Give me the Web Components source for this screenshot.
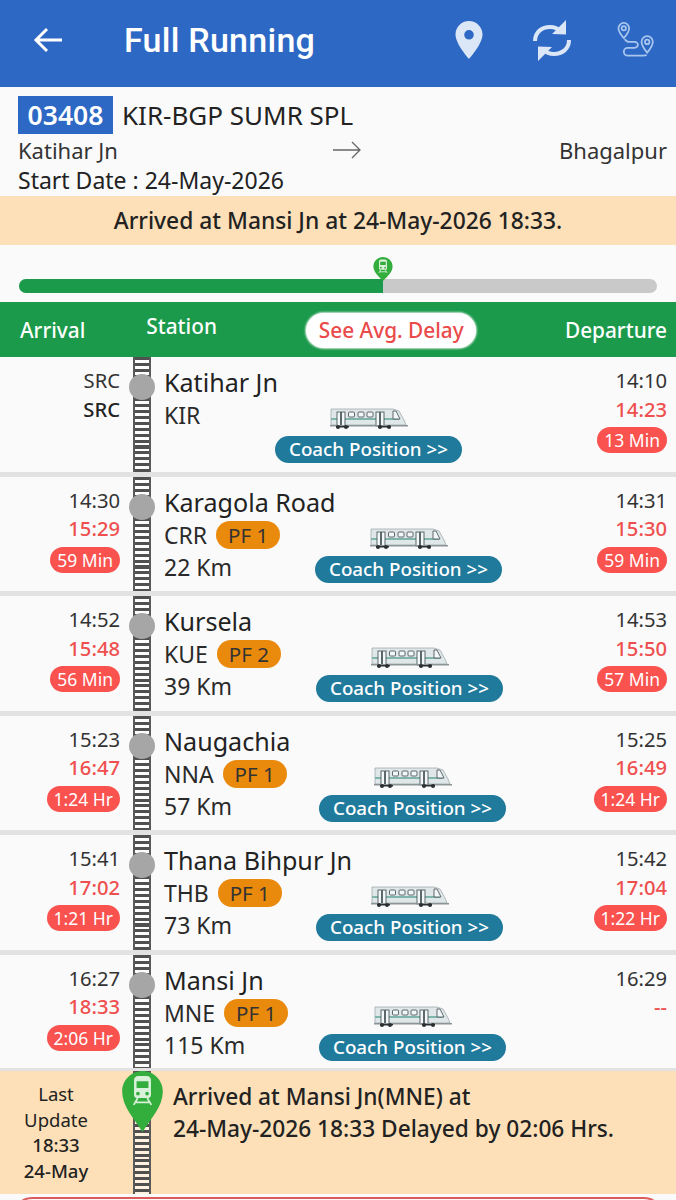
<!DOCTYPE html>
<html>
<head>
<meta charset="utf-8">
<title>Full Running</title>
<style>
  html, body { margin: 0; padding: 0; background: #fafafa; }
  body { width: 676px; height: 1200px; overflow: hidden; font-family: "Noto Sans", "Open Sans", sans-serif; color: #222; }
</style>
</head>
<body>
<app-bar></app-bar>
<train-head number="03408" name="KIR-BGP SUMR SPL" from="Katihar Jn" to="Bhagalpur" date="24-May-2026"></train-head>
<status-banner>Arrived at Mansi Jn at 24-May-2026 18:33.</status-banner>
<route-progress percent="57"></route-progress>
<table-head></table-head>
<station-row name="Katihar Jn" code="KIR" offset="111" sch-arr="SRC" act-arr="SRC" sch-dep="14:10" act-dep="14:23" dep-late="13 Min"></station-row>
<station-row name="Karagola Road" code="CRR" pf="PF 1" km="22 Km" offset="151" sch-arr="14:30" act-arr="15:29" arr-late="59 Min" sch-dep="14:31" act-dep="15:30" dep-late="59 Min"></station-row>
<station-row name="Kursela" code="KUE" pf="PF 2" km="39 Km" offset="152" sch-arr="14:52" act-arr="15:48" arr-late="56 Min" sch-dep="14:53" act-dep="15:50" dep-late="57 Min"></station-row>
<station-row name="Naugachia" code="NNA" pf="PF 1" km="57 Km" offset="155" sch-arr="15:23" act-arr="16:47" arr-late="1:24 Hr" sch-dep="15:25" act-dep="16:49" dep-late="1:24 Hr"></station-row>
<station-row name="Thana Bihpur Jn" code="THB" pf="PF 1" km="73 Km" offset="152" sch-arr="15:41" act-arr="17:02" arr-late="1:21 Hr" sch-dep="15:42" act-dep="17:04" dep-late="1:22 Hr"></station-row>
<station-row last name="Mansi Jn" code="MNE" pf="PF 1" km="115 Km" offset="155" sch-arr="16:27" act-arr="18:33" arr-late="2:06 Hr" sch-dep="16:29" act-dep="--"></station-row>
<last-update time="18:33" date="24-May">Arrived at Mansi Jn(MNE) at<br>24-May-2026 18:33 Delayed by 02:06 Hrs.</last-update>
<alert-card></alert-card>

<script>
const FONT = `"Noto Sans", "Open Sans", sans-serif`;
// small engine seen from the front, sits inside the 24 wide green pin
const TRAIN_GLYPH = `<path fill="#d9f0d9" fill-rule="evenodd" d="M9.500 3h5C16 3 17 4 17 5.500V14c0 1.200-.8 2-2 2H9c-1.200 0-2-.8-2-2V5.500C7 4 8 3 9.500 3zM8.500 6v4h7V6zM9.300 12.200a1.100 1.100 0 1 0 0 2.200 1.100 1.100 0 0 0 0-2.200zm5.400 0a1.100 1.100 0 1 0 0 2.200 1.100 1.100 0 0 0 0-2.200z"/><path fill="none" stroke="#d9f0d9" stroke-width="1.100" d="M9.200 16l-2.400 4M14.800 16l2.400 4M8.200 18.500h7.600"/>`;
const TRACK_STYLE = `
  position: relative; box-sizing: border-box;
  border-left: 2px solid #5a5a5a; border-right: 2px solid #5a5a5a;
  background: repeating-linear-gradient(180deg, #505050 0 3px, rgba(255,255,255,.55) 3px 5.900px);`;

class AppBar extends HTMLElement {
  constructor() {
    super();
    this.attachShadow({ mode: "open" });
    this.shadowRoot.innerHTML = `
    <style>
      :host { display: flex; align-items: center; height: 87px; background: #2d68c4; padding-bottom: 7px; box-sizing: border-box; color: #fff; }
      .back { width: 32px; height: 32px; margin-left: 32px; }
      h1 { margin: 0 0 0 60px; flex: 1; font: 500 34px Roboto, sans-serif; letter-spacing: .25px; }
      .icons { display: flex; align-items: center; }
      svg { display: block; }
    </style>
    <svg class="back" viewBox="0 0 32 32" fill="none" stroke="#fff" stroke-width="3"><path d="M30 16H4M15 5L4 16l11 11"/></svg>
    <h1>Full Running</h1>
    <div class="icons">
      <svg width="28" height="40" viewBox="0 0 28 40" style="margin-right:49px"><path fill="#dbe6f6" fill-rule="evenodd" d="M14 1C6.500 1 .5 7 .5 14.500 .5 24 14 39 14 39s13.500-15 13.500-24.500C27.500 7 21.500 1 14 1zm0 9a4.800 4.800 0 1 1 0 9.600A4.800 4.800 0 0 1 14 10z"/></svg>
      <svg width="40" height="43" viewBox="0 0 40 43" style="margin-right:45px" fill="none"><path stroke="#dbe6f6" stroke-width="4" d="M3 22C3 13 10 8 18 8c4 0 8 1.500 11 4.500M37 21c0 9-7 14-15 14-4 0-8-1.500-11-4.500"/><path fill="#dbe6f6" d="M34 1v14.500l-14-.5zM6 42V27.500l14 .5z"/></svg>
      <svg width="37" height="38" viewBox="0 0 38 38" style="margin-right:22px" fill="none" stroke="#a9c6ee" stroke-width="1.800"><path d="M7 1.500a5.500 5.500 0 0 0-5.500 5.500C1.500 11 7 17 7 17s5.500-6 5.500-10A5.500 5.500 0 0 0 7 1.500z"/><circle cx="7" cy="7" r="2.200"/><path d="M31 15a5.800 5.800 0 0 0-5.800 5.800C25.200 25 31 32 31 32s5.800-7 5.800-11.200A5.800 5.800 0 0 0 31 15z"/><circle cx="31" cy="21" r="2.300"/><path d="M8 18c1 2 2 3 5 3h5c2 0 3.500 1.500 3.500 3s-1.500 3-3.500 3h-7c-2 0-4 1.500-4 4s2 4 4 4h16l3.500-.5"/></svg>
    </div>`;
  }
}

class TrainHead extends HTMLElement {
  constructor() {
    super();
    this.attachShadow({ mode: "open" });
  }
  connectedCallback() {
    const a = (n) => this.getAttribute(n);
    this.shadowRoot.innerHTML = `
    <style>
      :host { display: block; height: 109px; padding: 9px 9px 0 18px; box-sizing: border-box; font-family: ${FONT}; color: #222; }
      .top { display: flex; align-items: center; height: 38px; }
      .num { background: #2d68c4; color: #fff; font-size: 26.500px; font-weight: 600; width: 95px; height: 38px; line-height: 38px; text-align: center; margin-right: 9px; }
      .name { font-size: 26px; }
      .route { display: grid; grid-template-columns: 1fr auto 1fr; align-items: center; font-size: 22px; height: 32px; color: #333; }
      .route svg { margin-left: 8px; }
      .route span:last-child { text-align: right; }
      .date { font-size: 23px; line-height: 28px; }
    </style>
    <div class="top"><span class="num">${a("number")}</span><span class="name">${a("name")}</span></div>
    <div class="route"><span>${a("from")}</span>
      <svg width="28" height="18" viewBox="0 0 28 18" fill="none" stroke="#666" stroke-width="1.300"><path d="M0 9h27M19 1l8 8-8 8"/></svg>
      <span>${a("to")}</span></div>
    <div class="date">Start Date : ${a("date")}</div>`;
  }
}

class StatusBanner extends HTMLElement {
  constructor() {
    super();
    this.attachShadow({ mode: "open" });
    this.shadowRoot.innerHTML = `
    <style>
      :host { display: flex; justify-content: center; align-items: center; height: 49px; background: #fde0b8; font: 500 22.800px ${FONT}; color: #222; }
    </style>
    <slot></slot>`;
  }
}

class RouteProgress extends HTMLElement {
  constructor() {
    super();
    this.attachShadow({ mode: "open" });
  }
  connectedCallback() {
    const pct = this.getAttribute("percent");
    this.shadowRoot.innerHTML = `
    <style>
      :host { display: block; height: 57px; padding: 34px 19px 0; box-sizing: border-box; }
      .bar { position: relative; height: 14px; background: #c9c9c9; border-radius: 7px; }
      .done { height: 100%; width: ${pct}%; background: #1a9a4a; border-radius: 7px 0 0 7px; }
      svg { position: absolute; left: calc(${pct}% - 10px); top: -22px; }
    </style>
    <div class="bar"><div class="done"></div>
      <svg width="20" height="24" viewBox="0 0 24 30"><path fill="#33ad3c" d="M12 0C5.400 0 0 5.400 0 12c0 7 7 13 12 18 5-5 12-11 12-18C24 5.400 18.600 0 12 0z"/>${TRAIN_GLYPH}</svg>
    </div>`;
  }
}

class TableHead extends HTMLElement {
  constructor() {
    super();
    this.attachShadow({ mode: "open" });
    this.shadowRoot.innerHTML = `
    <style>
      :host { display: flex; align-items: center; height: 55px; background: #1a9a4a; color: #fff; font: 500 20.800px ${FONT}; padding: 0 9px 0 20px; box-sizing: border-box; }
      .station { margin: -7px 0 0 61px; width: 160px; }
      .delay { background: #fff; color: #ea4a4a; font-weight: 500; width: 170px; height: 35px; line-height: 35px; margin-top: 2px; text-align: center; border-radius: 18px; box-shadow: 0 0 2px 1px #cfe6d6; }
      .dep { margin-left: auto; }
    </style>
    <span>Arrival</span><span class="station">Station</span>
    <span class="delay">See Avg. Delay</span><span class="dep">Departure</span>`;
  }
}

class CoachTrain extends HTMLElement {
  constructor() {
    super();
    this.attachShadow({ mode: "open" });
    this.shadowRoot.innerHTML = `
    <style>:host { display: block; height: 22px; } svg { display: block; }</style>
    <svg width="78" height="22" viewBox="0 0 78 22">
      <path fill="#dfe7e8" stroke="#8a9699" stroke-width=".6" d="M1 2h62l6 2 5 9 2 5H1z"/>
      <rect x="1" y="11" width="68" height="2" fill="#7fb5ad"/>
      <g fill="#f4f7f7" stroke="#4e5a5e" stroke-width=".9">
        <rect x="7" y="5" width="3.500" height="14"/><rect x="11.500" y="5" width="3.500" height="14"/>
        <rect x="18.500" y="5" width="6" height="5" rx="1"/><rect x="28" y="5" width="6" height="5" rx="1"/>
        <rect x="37" y="5" width="6" height="5" rx="1"/><rect x="46" y="5" width="3.500" height="14"/>
        <rect x="50.500" y="5" width="3.500" height="14"/><path d="M63 4l3 0 4 8-7 0z"/>
      </g>
      <rect x="0" y="18" width="78" height="1.500" fill="#8d9496"/>
      <g fill="#2b2f31"><rect x="6" y="19" width="13" height="1.500"/><rect x="48" y="19" width="13" height="1.500"/>
      <circle cx="8" cy="20" r="2"/><circle cx="16" cy="20" r="2"/><circle cx="50" cy="20" r="2"/><circle cx="59" cy="20" r="2"/></g>
    </svg>`;
  }
}

class StationRow extends HTMLElement {
  constructor() {
    super();
    this.attachShadow({ mode: "open" });
  }
  time(sch, act, late) {
    return `<div class="sch">${sch}</div>
      <div class="act ${act === "SRC" ? "src" : ""}">${act}</div>
      ${late ? `<div class="late">${late}</div>` : ""}`;
  }
  connectedCallback() {
    const a = (n) => this.getAttribute(n);
    this.shadowRoot.innerHTML = `
    <style>
      :host { display: grid; grid-template-columns: 120px 13px 18px 13px 1fr auto; height: 114.500px; border-bottom: 5px solid #e2e2e2; font-family: ${FONT}; color: #222; }
      :host([last]) { height: 113.500px; border-bottom-width: 3px; }
      .side { grid-column: 1; text-align: right; padding-top: 9px; font-size: 20.200px; line-height: 28.500px; }
      .side.dep { grid-column: 6; padding-right: 9px; }
      .sch { color: #333; }
      .act { color: #ef4f4f; font-weight: 500; }
      .act.src { color: #222; }
      .late { display: inline-block; background: #f9524f; color: #fff; font-size: 17.500px; line-height: 26px; height: 26px; padding: 0 7px; border-radius: 13px; margin-top: 4px; vertical-align: top; }
      .track { grid-column: 3; ${TRACK_STYLE} }
      .dot { position: absolute; left: -6px; top: 17px; width: 26px; height: 26px; border-radius: 50%; background: #a6a6a6; }
      .main { grid-column: 5; padding-top: 9px; }
      .name { font-size: 25.100px; line-height: 33px; }
      .info { display: flex; }
      .codes { width: calc(var(--offset) * 1px); font-size: 23px; line-height: 32px; color: #2a2a2a; }
      .code { display: flex; align-items: center; height: 32px; }
      .pf { background: #ea8a0c; color: #333; font-size: 20.500px; line-height: 28px; height: 28px; width: 64px; text-align: center; border-radius: 14px; margin-left: 9px; }
      .coach { width: 187px; display: flex; flex-direction: column; align-items: center; padding-top: 8px; }
      .coach coach-train { margin-bottom: 7px; }
      .btn { width: 187px; height: 27px; line-height: 27px; background: #1f7a9c; color: #fff; font-size: 18.800px; font-weight: 500; text-align: center; border-radius: 14px; }
    </style>
    <div class="side">${this.time(a("sch-arr"), a("act-arr"), a("arr-late"))}</div>
    <div class="track"><span class="dot"></span></div>
    <div class="main">
      <div class="name">${a("name")}</div>
      <div class="info" style="--offset:${a("offset")}">
        <div class="codes">
          <div class="code">${a("code")}${a("pf") ? `<span class="pf">${a("pf")}</span>` : ""}</div>
          ${a("km") ? `<div>${a("km")}</div>` : ""}
        </div>
        <div class="coach">
          <coach-train></coach-train>
          <div class="btn">Coach Position &gt;&gt;</div>
        </div>
      </div>
    </div>
    <div class="side dep">${this.time(a("sch-dep"), a("act-dep"), a("dep-late"))}</div>`;
  }
}

class LastUpdate extends HTMLElement {
  constructor() {
    super();
    this.attachShadow({ mode: "open" });
  }
  connectedCallback() {
    this.shadowRoot.innerHTML = `
    <style>
      :host { display: grid; grid-template-columns: 112px 21px 18px 22px 1fr; height: 123px; background: #fde0b8; font-family: ${FONT}; color: #222; }
      .when { text-align: center; font-size: 18.500px; line-height: 25.700px; padding-top: 10px; }
      .when b { font-weight: 500; display: block; }
      .track { grid-column: 3; ${TRACK_STYLE} }
      svg { position: absolute; left: -13px; top: 0; }
      .msg { grid-column: 5; padding-top: 10px; font-size: 22.700px; font-weight: 500; line-height: 32px; }
    </style>
    <div class="when">Last<br>Update<b>${this.getAttribute("time")}</b><b>${this.getAttribute("date")}</b></div>
    <div class="track"><svg width="41" height="61" viewBox="0 0 24 36"><path fill="#33ad3c" d="M12 0C5.400 0 0 5.400 0 12c0 9 7 16 12 24 5-8 12-15 12-24C24 5.400 18.600 0 12 0z"/>${TRAIN_GLYPH}</svg></div>
    <div class="msg"><slot></slot></div>`;
  }
}

// only the top edge of this card is on screen, the rest is below the fold
class AlertCard extends HTMLElement {
  constructor() {
    super();
    this.attachShadow({ mode: "open" });
    this.shadowRoot.innerHTML = `
    <style>
      :host { display: block; margin: 3px 19px 0; height: 3px; }
      svg { display: block; }
    </style>
    <svg width="638" height="3" viewBox="0 0 638 3" fill="none" stroke="#dc5a5a" stroke-width="2"><path d="M3 4C6 1.500 9 1 14 1H624c5 0 8 .5 11 3"/></svg>`;
  }
}

customElements.define("app-bar", AppBar);
customElements.define("train-head", TrainHead);
customElements.define("status-banner", StatusBanner);
customElements.define("route-progress", RouteProgress);
customElements.define("table-head", TableHead);
customElements.define("coach-train", CoachTrain);
customElements.define("station-row", StationRow);
customElements.define("last-update", LastUpdate);
customElements.define("alert-card", AlertCard);
</script>
</body>
</html>
